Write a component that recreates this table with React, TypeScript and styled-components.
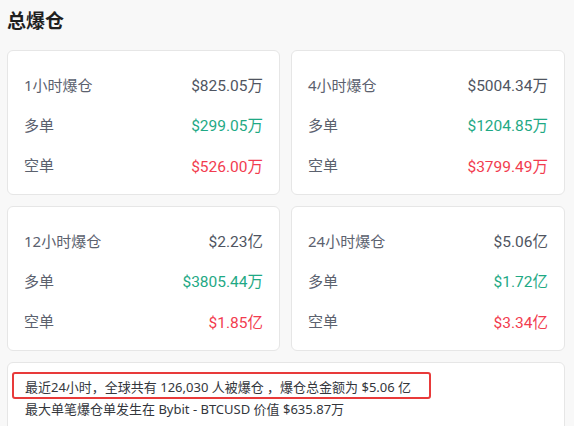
import React from "react";
import styled, { createGlobalStyle } from "styled-components";

const Global = createGlobalStyle`
  html, body { margin: 0; padding: 0; background: #f8f8f8; }
  body { font-family: "Noto Sans", "Noto Sans CJK SC", sans-serif; }
`;

const Page = styled.div`
  width: 558px;
  padding: 0 9px 0 7px;
  background: #f8f8f8;
  height: 426px;
  overflow: hidden;
`;

const Title = styled.h2`
  margin: 0;
  height: 38px;
  display: flex;
  align-items: center;
  font-size: 19px;
  font-weight: 700;
  color: #1f1f1f;
  font-family: "Noto Sans CJK SC", sans-serif;
  padding-bottom: 12px;
  padding-left: 0;
`;

const Grid = styled.div`
  display: grid;
  grid-template-columns: 273px 274px;
  column-gap: 11px;
  row-gap: 11px;
`;

const Card = styled.div`
  background: #fff;
  border: 1px solid #e6e6e6;
  border-radius: 6px;
  box-sizing: border-box;
  height: 145px;
  padding: 13px 16px 9px 16px;
  display: flex;
  flex-direction: column;
`;

const Row = styled.div`
  height: 41px;
  display: flex;
  align-items: center;
  justify-content: space-between;
`;

const Label = styled.span`
  font-family: "Noto Sans", "Noto Sans CJK SC", sans-serif;
  font-size: 15px;
  color: #5b616e;
`;

const Value = styled.span<{ $tone: "neutral" | "up" | "down" }>`
  font-family: "Roboto", "Noto Sans CJK SC", sans-serif;
  font-size: 15.5px;
  color: ${(p) =>
    p.$tone === "up" ? "#1fa985" : p.$tone === "down" ? "#f23c4f" : "#4f5561"};
`;

const Summary = styled.div`
  margin-top: 11px;
  background: #fff;
  border: 1px solid #e6e6e6;
  border-radius: 6px;
  box-sizing: border-box;
  height: 80px;
  padding: 9px 0 0 4px;
  font-family: "Noto Sans", "Noto Sans CJK SC", sans-serif;
  font-size: 13px;
  color: #33363c;
`;

const Highlight = styled.div`
  display: inline-flex;
  align-items: center;
  box-sizing: border-box;
  width: 419px;
  height: 27px;
  padding: 2px 0 0 11px;
  border: 2px solid #e83a3a;
  border-radius: 3px;
  white-space: pre;
`;

const Line = styled.div`
  padding-left: 13px;
  line-height: 22px;
  margin-top: -1px;
`;

type Item = { label: string; value: string; tone: "neutral" | "up" | "down" };

const cards: Item[][] = [
  [
    { label: "1小时爆仓", value: "$825.05万", tone: "neutral" },
    { label: "多单", value: "$299.05万", tone: "up" },
    { label: "空单", value: "$526.00万", tone: "down" },
  ],
  [
    { label: "4小时爆仓", value: "$5004.34万", tone: "neutral" },
    { label: "多单", value: "$1204.85万", tone: "up" },
    { label: "空单", value: "$3799.49万", tone: "down" },
  ],
  [
    { label: "12小时爆仓", value: "$2.23亿", tone: "neutral" },
    { label: "多单", value: "$3805.44万", tone: "up" },
    { label: "空单", value: "$1.85亿", tone: "down" },
  ],
  [
    { label: "24小时爆仓", value: "$5.06亿", tone: "neutral" },
    { label: "多单", value: "$1.72亿", tone: "up" },
    { label: "空单", value: "$3.34亿", tone: "down" },
  ],
];

export default function App() {
  return (
    <>
      <Global />
      <Page>
        <Title>总爆仓</Title>
        <Grid>
          {cards.map((c, i) => (
            <Card key={i}>
              {c.map((r, j) => (
                <Row key={j}>
                  <Label>{r.label}</Label>
                  <Value $tone={r.tone}>{r.value}</Value>
                </Row>
              ))}
            </Card>
          ))}
        </Grid>
        <Summary>
          <Highlight>最近24小时，全球共有 126,030 人被爆仓 ，爆仓总金额为 $5.06 亿</Highlight>
          <Line>最大单笔爆仓单发生在 Bybit - BTCUSD 价值 $635.87万</Line>
        </Summary>
      </Page>
    </>
  );
}
